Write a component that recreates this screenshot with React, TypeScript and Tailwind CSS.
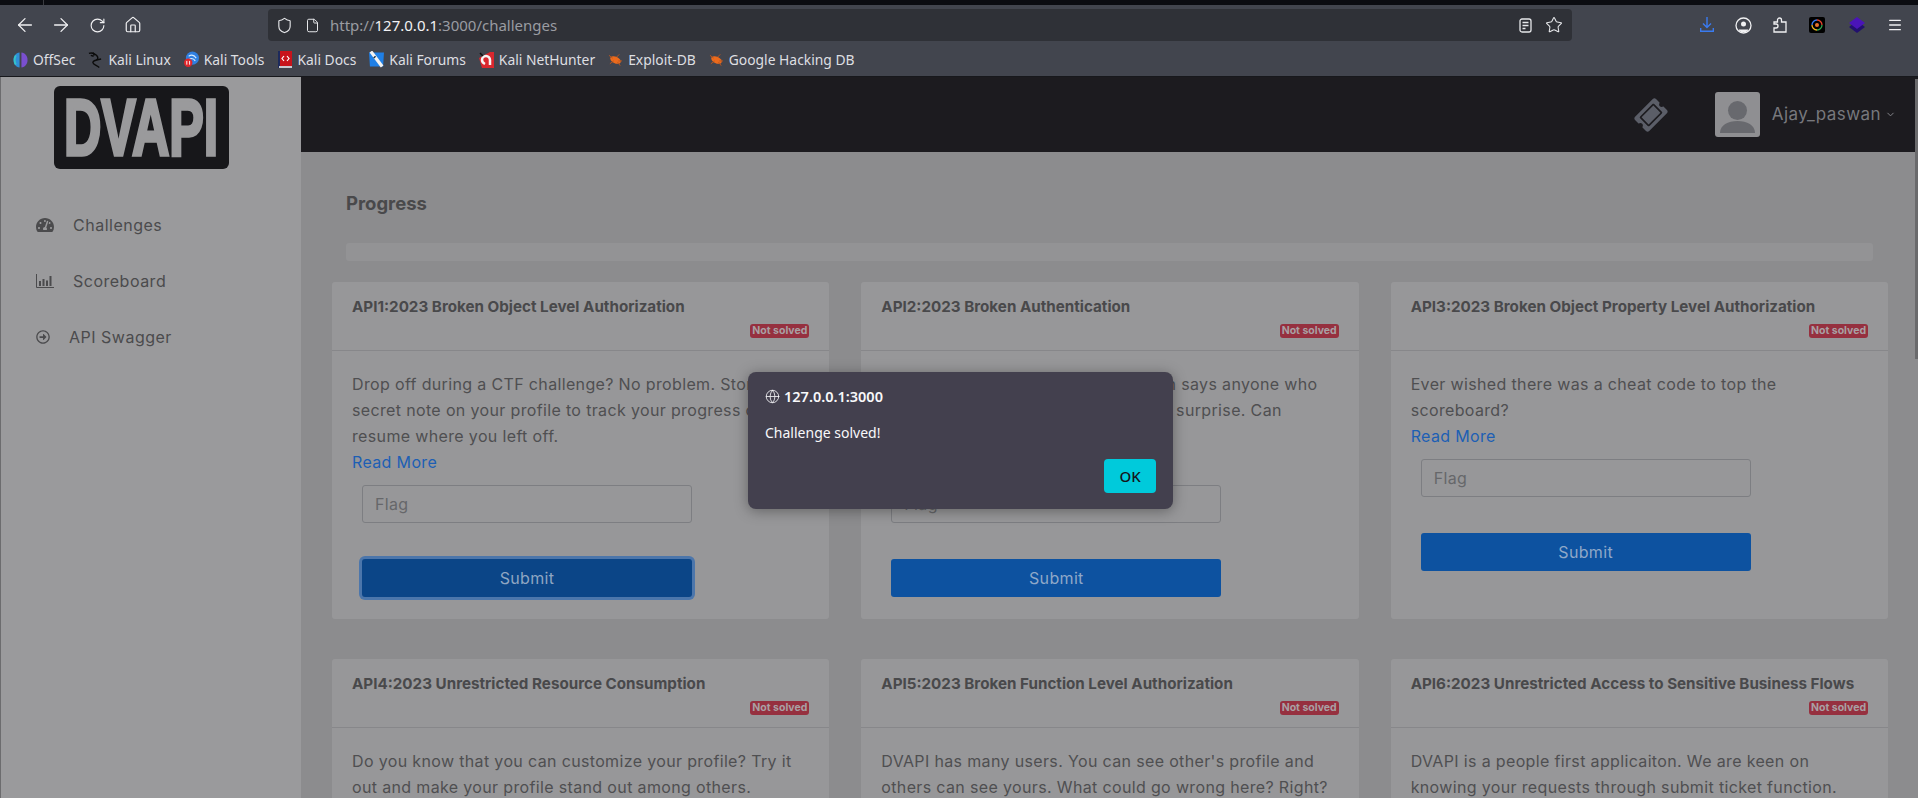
import { ArrowLeft, ArrowRight, ChevronDown, File, Globe, Home, Menu, RotateCw, Shield, Star } from "lucide-react";
import { FaRegArrowAltCircleRight, FaTachometerAlt, FaTicketAlt } from "react-icons/fa";

const bookmarks = [
  { label: "OffSec", icon: <OffSecIcon /> },
  { label: "Kali Linux", icon: <DragonIcon /> },
  { label: "Kali Tools", icon: <ToolsIcon /> },
  { label: "Kali Docs", icon: <DocsIcon /> },
  { label: "Kali Forums", icon: <ForumsIcon /> },
  { label: "Kali NetHunter", icon: <HunterIcon /> },
  { label: "Exploit-DB", icon: <BugIcon /> },
  { label: "Google Hacking DB", icon: <BugIcon /> },
];

const cards = [
  {
    title: "API1:2023 Broken Object Level Authorization",
    lines: ["Drop off during a CTF challenge? No problem. Store a", "secret note on your profile to track your progress or", "resume where you left off."],
    focused: true,
    more: true,
  },
  {
    title: "API2:2023 Broken Authentication",
    lines: ["Rumour has it that a user called Brian says anyone who", "logs in to their account will get some surprise. Can", "you get in?"],
    more: true,
  },
  {
    title: "API3:2023 Broken Object Property Level Authorization",
    lines: ["Ever wished there was a cheat code to top the", "scoreboard?"],
    more: true,
  },
  {
    title: "API4:2023 Unrestricted Resource Consumption",
    lines: ["Do you know that you can customize your profile? Try it", "out and make your profile stand out among others."],
  },
  {
    title: "API5:2023 Broken Function Level Authorization",
    lines: ["DVAPI has many users. You can see other's profile and", "others can see yours. What could go wrong here? Right?"],
  },
  {
    title: "API6:2023 Unrestricted Access to Sensitive Business Flows",
    lines: ["DVAPI is a people first applicaiton. We are keen on", "knowing your requests through submit ticket function."],
  },
];

function OffSecIcon() {
  return (
    <svg width="15" height="18" viewBox="0 0 16 18">
      <path d="M7 1C3 1.500 0.500 5 0.500 9s2.500 7.500 6.500 8z" fill="#2f8fd8" />
      <path d="M9 1c4 .5 6.500 4 6.500 8s-2.500 7.500-6.500 8z" fill="#7a4fd0" />
      <path d="M3 4c-1.500 3-1.500 7 0 10" stroke="#35c3c9" strokeWidth="2" fill="none" />
    </svg>
  );
}

function DragonIcon() {
  return (
    <svg width="15" height="18" viewBox="0 0 16 18" fill="none" stroke="#0b0b0b" strokeWidth="1.500">
      <path d="M1 2c3-1 6 0 8 2 2 2 2 4 0 5-3 1-5 2-3 4 1.500 1.500 4 2 6 4" />
      <path d="M5 1l2 3M9 9l5-1M3 4l3 1" />
    </svg>
  );
}

function ToolsIcon() {
  return (
    <svg width="15" height="17" viewBox="0 0 16 17">
      <circle cx="9" cy="7" r="7" fill="#2f7fe0" />
      <path d="M5 5c3-2 6-1 8 2M6 8c2-1 4-1 6 2" stroke="#d9ecff" strokeWidth="1.200" fill="none" />
      <circle cx="4.500" cy="12" r="4.500" fill="#e0252b" />
      <path d="M3 10v4M6 10v4" stroke="#fff" strokeWidth="1" />
    </svg>
  );
}

function DocsIcon() {
  return (
    <svg width="14" height="17" viewBox="0 0 14 17">
      <rect x="1" y="0" width="13" height="15" fill="#c8141c" />
      <rect x="0" y="0" width="2" height="17" fill="#1d2a5c" />
      <rect x="1" y="15" width="13" height="2" fill="#c9c9d0" />
      <path d="M6 5L4 7.500 6 10M9 5l2 2.500L9 10" stroke="#fff" strokeWidth="1.200" fill="none" />
    </svg>
  );
}

function ForumsIcon() {
  return (
    <svg width="16" height="17" viewBox="0 0 16 17">
      <path d="M0 1h16l-1 15H1z" fill="#1f7fe6" />
      <path d="M2 0l12 16" stroke="#f2f2f2" strokeWidth="3.500" />
      <path d="M5 7l2-2" stroke="#20303f" strokeWidth="1.500" />
    </svg>
  );
}

function HunterIcon() {
  return (
    <svg width="15" height="16" viewBox="0 0 15 16">
      <path d="M0 6L11 0h4v16H3z" fill="#d9272e" />
      <path d="M11 13V8a4 4 0 0 0-8 0c0 2 1 3 3 4" stroke="#f5f5f5" strokeWidth="2.500" fill="none" />
      <path d="M1 1l3 3" stroke="#111" strokeWidth="1.500" />
    </svg>
  );
}

function BugIcon() {
  return (
    <svg width="16" height="14" viewBox="0 0 16 14">
      <ellipse cx="8" cy="7" rx="6" ry="3.500" transform="rotate(25 8 7)" fill="#ec6a1c" />
      <path d="M1 2l4 3M12 1L9 4M15 8h-4M13 13l-3-4M2 11l4-3" stroke="#b9561f" strokeWidth="1" />
    </svg>
  );
}

function BarsIcon() {
  return (
    <svg width="18" height="14" viewBox="0 0 18 14" fill="none" stroke="#4b4b4d">
      <path d="M.5 0v13.500H18" />
      <path d="M4 12V7M7.500 12V5M11 12V6.500M14.500 12V2" strokeWidth="2" />
    </svg>
  );
}

function ReaderIcon() {
  return (
    <svg width="14" height="15" viewBox="0 0 14 15" fill="none" stroke="#e6e7ea" strokeWidth="1.300">
      <rect x="1" y="1" width="11" height="13" rx="2" />
      <path d="M3.500 4.500h6M3.500 7.500h6M3.500 10.500h3" />
    </svg>
  );
}

function DownloadIcon() {
  return (
    <svg width="14" height="16" viewBox="0 0 14 16" fill="none" stroke="#3a7bf0" strokeWidth="1.400">
      <path d="M7 0v10M3 6.500L7 10.500l4-4M.7 11v3.300h12.600V11" />
    </svg>
  );
}

function AccountIcon() {
  return (
    <svg width="17" height="17" viewBox="0 0 17 17" fill="none">
      <circle cx="8.500" cy="8.500" r="7.500" stroke="#f0f0f2" strokeWidth="1.300" />
      <circle cx="8.500" cy="7" r="2.500" fill="#f0f0f2" />
      <path d="M4 12.500h9v1l-2 1.500H6l-2-1.500z" fill="#f0f0f2" />
    </svg>
  );
}

function PuzzleIcon() {
  return (
    <svg width="14" height="16" viewBox="0 0 14 16" fill="none" stroke="#f0f0f2" strokeWidth="1.300">
      <path d="M1 15V11h2a1.500 1.500 0 0 0 0-4H1V5h3.500V3a2 2 0 0 1 4 0v2H13v10z" />
    </svg>
  );
}

function RingIcon() {
  return (
    <svg width="16" height="16" viewBox="0 0 16 16">
      <rect width="16" height="16" rx="2" fill="#000" />
      <path d="M8 3a5 5 0 0 1 5 5" stroke="#e8452c" strokeWidth="1.300" fill="none" />
      <path d="M13 8a5 5 0 0 1-5 5" stroke="#2fa84f" strokeWidth="1.300" fill="none" />
      <path d="M8 13a5 5 0 0 1-5-5" stroke="#f3b61f" strokeWidth="1.300" fill="none" />
      <path d="M3 8a5 5 0 0 1 5-5" stroke="#3a7bf0" strokeWidth="1.300" fill="none" />
      <circle cx="8" cy="8" r="2" fill="#e8722c" />
    </svg>
  );
}

function LayersIcon() {
  return (
    <svg width="16" height="16" viewBox="0 0 16 16">
      <path d="M8 4l8 6-8 6-8-6z" fill="#22106e" />
      <path d="M8 0l8 6-8 6-8-6z" fill="#4a14b8" />
    </svg>
  );
}

function Avatar() {
  return (
    <svg width="45" height="45" viewBox="0 0 45 45" className="rounded-[3px]">
      <rect width="45" height="45" fill="#8f8f92" />
      <circle cx="22.500" cy="18.500" r="9.500" fill="#68696e" />
      <path d="M5 41c0-8 8-12 17.500-12S40 33 40 41z" fill="#68696e" />
    </svg>
  );
}

function ToolbarButton({ children, className }: { children: React.ReactNode; className: string }) {
  return <span className={`flex h-8 items-center justify-center ${className}`}>{children}</span>;
}

function ChallengeCard({ card }: { card: (typeof cards)[number] }) {
  return (
    <article className="flex flex-col rounded-[3px] bg-[#979799]">
      <header className="border-b border-[#87878a] px-5 pt-[13px] pb-3">
        <h2 className="text-[15.200px] leading-6 font-bold text-[#49494b]">{card.title}</h2>
        <div className="mt-[5px] flex justify-end">
          <span className="flex h-3.5 w-[59px] items-center justify-center rounded-[3px] bg-[#96303f] text-[10.500px] font-bold text-[#a9a0a4]">
            Not solved
          </span>
        </div>
      </header>
      <div className="px-5 pt-5 pb-[22px] text-[16px] leading-[26px] tracking-[0.35px] text-[#4f4f51]">
        {card.lines.map((line) => (
          <p key={line} className="whitespace-nowrap">
            {line}
          </p>
        ))}
        {card.more && <p className="text-[#1d5fb4]">Read More</p>}
        <div className="mt-2.5 ml-2.5 flex h-[38px] w-[330px] items-center rounded-[3px] border border-[#7d7e82] px-3 text-[#66676a]">
          Flag
        </div>
        <button
          type="button"
          className={
            card.focused
              ? "mt-9 ml-2.5 block h-[38px] w-[330px] rounded-[3px] bg-[#0b4587] text-[#8fa6c2] ring-[3px] ring-[#4c76ab]"
              : "mt-9 ml-2.5 block h-[38px] w-[330px] rounded-[3px] bg-[#0d52a0] text-[#8fa8c8]"
          }
        >
          Submit
        </button>
      </div>
    </article>
  );
}

export default function App() {
  return (
    <div className="relative flex h-screen flex-col overflow-hidden bg-[#8c8c8e] font-['Inter',sans-serif]">
      <div className="h-[5px] shrink-0 bg-[#0b0c11] pl-[43px]">
        <div className="h-full w-px bg-[#3a3b40]" />
      </div>

      <div className="h-[72px] shrink-0 border-b border-[#17181c] bg-[#42454e] font-['Noto_Sans',sans-serif]">
        <div className="flex h-9 items-center pt-1 pl-[7px]">
          <ToolbarButton className="w-9"><ArrowLeft size={22} color="#f0f0f2" strokeWidth={1.400} /></ToolbarButton>
          <ToolbarButton className="w-9"><ArrowRight size={22} color="#f0f0f2" strokeWidth={1.400} /></ToolbarButton>
          <ToolbarButton className="w-9"><RotateCw size={17} color="#f0f0f2" strokeWidth={1.600} /></ToolbarButton>
          <ToolbarButton className="w-9"><Home size={18} color="#f0f0f2" strokeWidth={1.600} /></ToolbarButton>
          <div className="ml-[117px] flex h-8 w-[1304px] items-center rounded-[4px] bg-[#2f3137] pr-[9px] pl-[8px]">
            <Shield size={17} color="#e6e7ea" strokeWidth={1.600} />
            <File size={15} color="#e6e7ea" strokeWidth={1.600} className="ml-[12px]" />
            <span className="ml-[10px] text-[15px] text-[#9a9ca2]">
              http://<span className="text-[#f2f2f4]">127.0.0.1</span>:3000/challenges
            </span>
            <span className="ml-auto flex items-center gap-[12px]">
              <ReaderIcon />
              <Star size={18} color="#e6e7ea" strokeWidth={1.400} />
            </span>
          </div>
          <span className="ml-[128px] flex w-[14px] justify-center"><DownloadIcon /></span>
          <span className="ml-[21px] flex w-[17px] justify-center"><AccountIcon /></span>
          <span className="ml-[21px] flex w-[14px] justify-center"><PuzzleIcon /></span>
          <span className="ml-[22px] flex w-4 justify-center"><RingIcon /></span>
          <span className="ml-[24px] flex w-4 justify-center"><LayersIcon /></span>
          <span className="ml-[22px] flex w-[16px] justify-center"><Menu size={16} color="#f0f0f2" /></span>
        </div>
        <nav className="flex h-[35px] items-center gap-[13px] pt-[3px] pl-[13px] text-[13.850px] text-[#dedfe2]">
          {bookmarks.map((b) => (
            <span key={b.label} className="flex items-center gap-[5px]">
              <span className="flex w-[15px] justify-center">{b.icon}</span>
              {b.label}
            </span>
          ))}
        </nav>
      </div>

      <div className="flex min-h-0 flex-1">
        <aside className="w-[301px] shrink-0 border-l border-[#6c6c6e] bg-[#9a9a9c]">
          <div className="mt-[9px] ml-[53px] flex h-[83px] w-[175px] items-center justify-center rounded-[6px] bg-[#17171a]">
            <span className="scale-x-[1.150] scale-y-[1.750] font-['Liberation_Sans',sans-serif] text-[45px] leading-none font-bold text-[#9a9a9c] [-webkit-text-stroke:2px_#9a9a9c]">
              DVAPI
            </span>
          </div>
          <ul className="mt-[28px] text-[16px] tracking-[0.5px] text-[#4b4b4d]">
            <li className="flex h-14 items-center pl-[35px]">
              <FaTachometerAlt size={18} />
              <span className="ml-[19px]">Challenges</span>
            </li>
            <li className="flex h-14 items-center pl-[35px]">
              <BarsIcon />
              <span className="ml-[19px]">Scoreboard</span>
            </li>
            <li className="flex h-14 items-center pl-[35px]">
              <FaRegArrowAltCircleRight size={14} />
              <span className="ml-[19px]">API Swagger</span>
            </li>
          </ul>
        </aside>

        <main className="min-w-0 flex-1">
          <div className="flex h-[75px] items-center justify-end bg-[#1c1b1f] pr-[22px]">
            <FaTicketAlt size={30} color="#5b5e68" className="-rotate-45" />
            <span className="ml-[49px] flex"><Avatar /></span>
            <span className="ml-3 text-[17px] tracking-[0.45px] text-[#77787d]">Ajay_paswan</span>
            <ChevronDown size={11} color="#8a8b90" strokeWidth={2} className="ml-[4px]" />
          </div>
          <div className="pt-[38px] pr-[30px] pl-[31px]">
            <h1 className="pl-[14px] text-[18.500px] leading-[27px] font-bold text-[#49494b]">Progress</h1>
            <div className="mt-[26px] mr-[15px] ml-[14px] h-[18px] rounded-[3px] bg-[#939395]" />
            <div className="mt-[21px] grid grid-cols-3 gap-x-8 gap-y-10">
              {cards.map((card) => (
                <ChallengeCard key={card.title} card={card} />
              ))}
            </div>
          </div>
        </main>
      </div>

      <div className="absolute top-[79px] right-0 h-[280px] w-[3px] bg-[#6a6a6c]" />

      <div className="absolute top-[372px] left-[748px] flex h-[137px] w-[425px] flex-col rounded-[8px] bg-[#43404e] px-[17px] pt-[14px] font-['Noto_Sans',sans-serif] text-[#f8f8fa] shadow-[0_2px_14px_rgba(0,0,0,0.35)]">
        <div className="flex items-center gap-1 text-[14.500px] leading-5 font-semibold">
          <Globe size={15} strokeWidth={1.300} />
          127.0.0.1:3000
        </div>
        <p className="mt-[17px] text-[14px] leading-5">Challenge solved!</p>
        <button
          type="button"
          className="mt-4 ml-auto h-[34px] w-[52px] rounded-[4px] bg-[#00cadb] text-[15px] font-medium text-[#15141a]"
        >
          OK
        </button>
      </div>
    </div>
  );
}
